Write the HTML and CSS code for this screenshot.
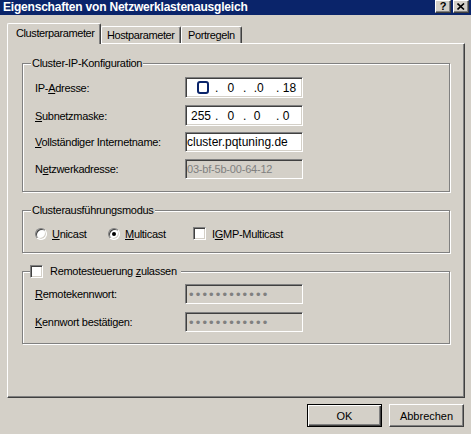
FILE: index.html
```html
<!DOCTYPE html>
<html lang="de">
<head>
  <meta charset="UTF-8" />
  <title>Eigenschaften von Netzwerklastenausgleich</title>
  <link rel="stylesheet" href="styles.css">
</head>
<body>
  <div class="window">
    <div class="titlebar">
      <span class="title">Eigenschaften von Netzwerklastenausgleich</span>
      <div class="caption-buttons">
        <div class="cap-btn help">?</div>
        <div class="cap-btn">
          <svg width="8" height="7" viewBox="0 0 8 7">
            <path d="M0.5 0.5 L7 6.5 M7 0.5 L0.5 6.5" stroke="#000" stroke-width="1.6" fill="none"/>
          </svg>
        </div>
      </div>
    </div>

    <div class="tabs">
      <div class="tab active">Clusterparameter</div>
      <div class="tab host">Hostparameter</div>
      <div class="tab port">Portregeln</div>
    </div>

    <div class="panel">
      <!-- Cluster-IP -->
      <fieldset class="group group-ip">
        <legend>Cluster-IP-Konfiguration</legend>
        <div class="row">
          <span class="label">IP-<u>A</u>dresse:</span>
          <div class="field ip">
            <span class="oct o1"><span class="caret"></span></span><span class="dot">.</span>
            <span class="oct o2">0</span><span class="dot">.</span>
            <span class="oct o3">.0</span><span class="dot">.</span>
            <span class="oct o4">18</span>
          </div>
        </div>
        <div class="row">
          <span class="label"><u>S</u>ubnetzmaske:</span>
          <div class="field ip">
            <span class="oct o1">255</span><span class="dot">.</span>
            <span class="oct o2">0</span><span class="dot">.</span>
            <span class="oct o3">0</span><span class="dot">.</span>
            <span class="oct o4">0</span>
          </div>
        </div>
        <div class="row short">
          <span class="label"><u>V</u>ollständiger Internetname:</span>
          <div class="field text">cluster.pqtuning.de</div>
        </div>
        <div class="row short">
          <span class="label">N<u>e</u>tzwerkadresse:</span>
          <div class="field disabled">03-bf-5b-00-64-12</div>
        </div>
      </fieldset>

      <!-- Modus -->
      <fieldset class="group group-mode">
        <legend>Clusterausführungsmodus</legend>
        <div class="options">
          <div class="option opt-uni"><span class="radio"></span><span><u>U</u>nicast</span></div>
          <div class="option opt-multi"><span class="radio checked"></span><span><u>M</u>ulticast</span></div>
          <div class="option"><span class="check"></span><span>I<u>G</u>MP-Multicast</span></div>
        </div>
      </fieldset>

      <!-- Remote -->
      <fieldset class="group group-remote">
        <legend><span class="check"></span><span>Remotesteuerung <u>z</u>ulassen</span></legend>
        <div class="row short">
          <span class="label"><u>R</u>emotekennwort:</span>
          <div class="field disabled"><span class="dots">••••••••••••</span></div>
        </div>
        <div class="row short">
          <span class="label"><u>K</u>ennwort bestätigen:</span>
          <div class="field disabled"><span class="dots">••••••••••••</span></div>
        </div>
      </fieldset>
    </div>

    <div class="buttons">
      <div class="btn default">OK</div>
      <div class="btn">Abbrechen</div>
    </div>
  </div>
</body>
</html>
```

FILE: styles.css
```css
body {
  margin: 0;
  background-color: #d4d0c8;
  font-family: 'Liberation Sans', Arial, sans-serif;
  font-size: 11px;
  color: #000;
}

.window {
  width: 471px;
  height: 434px;
  background-color: #d4d0c8;
  overflow: hidden;
}

/* Titelleiste */
.titlebar {
  height: 15px;
  background-color: #0a246a;
  display: flex;
  justify-content: space-between;
  align-items: flex-start;
}

.title {
  color: #fff;
  font-weight: bold;
  font-size: 12px;
  letter-spacing: -0.2px;
  line-height: 15px;
  padding-left: 3px;
}

.caption-buttons {
  display: flex;
  gap: 2px;
  padding-right: 2px;
}

.cap-btn {
  width: 16px;
  height: 13px;
  box-sizing: border-box;
  background-color: #d4d0c8;
  border: 1px solid;
  border-color: #fff #404040 #404040 #fff;
  box-shadow: inset -1px -1px 0 #808080;
  display: flex;
  align-items: center;
  justify-content: center;
}

.cap-btn.help {
  font-weight: bold;
  font-size: 11px;
  line-height: 11px;
}

/* Reiter */
.tabs {
  display: flex;
  align-items: flex-end;
  margin: 8px 0 0 7px;
  height: 21px;
}

.tab {
  box-sizing: border-box;
  height: 17px;
  margin-bottom: 1px;
  padding: 2px 0 1px 5px;
  line-height: 13px;
  letter-spacing: -0.4px;
  border-top: 1px solid #fff;
  border-left: 1px solid #fff;
  border-right: 1px solid #404040;
  box-shadow: inset -1px 0 0 #808080;
  border-radius: 2px 2px 0 0;
  background-color: #d4d0c8;
}

.tab.active {
  position: relative;
  z-index: 1;
  width: 94px;
  height: 21px;
  margin-bottom: 0;
  padding: 3px 0 4px 8px;
}

.tab.host {
  width: 80px;
}

.tab.port {
  width: 61px;
  padding-left: 6px;
}

.panel {
  width: 458px;
  height: 355px;
  box-sizing: border-box;
  margin: -1px 0 0 7px;
  padding: 13px 0 0 14px;
  border-top: 1px solid #fff;
  border-left: 1px solid #fff;
  border-right: 1px solid #404040;
  border-bottom: 1px solid #404040;
  box-shadow: inset -1px -1px 0 #808080;
}

/* Gruppen */
.group {
  width: 428px;
  box-sizing: border-box;
  margin: 0;
  padding: 0 12px;
  border: 1px solid #808080;
  box-shadow: inset 1px 1px 0 #fff, 1px 1px 0 #fff;
  min-inline-size: 0;
}

.group legend {
  margin-left: -4px;
  padding: 0 1px;
  line-height: 13px;
  letter-spacing: -0.3px;
  background-color: #d4d0c8;
}

.group-ip {
  padding-top: 7px;
  padding-bottom: 12px;
}

.group-mode {
  margin-top: 12px;
  padding-top: 10px;
  padding-bottom: 12px;
}

.group-remote {
  margin-top: 12px;
  padding-top: 6px;
  padding-bottom: 11px;
}

.group-remote legend {
  display: flex;
  align-items: center;
  gap: 6px;
  padding: 0 4px 0 0;
  margin-left: -5px;
}

.row {
  display: flex;
  align-items: center;
  height: 21px;
  margin-bottom: 7px;
}

.row + .row {
  margin-bottom: 6px;
}

.row.short {
  height: 20px;
  margin-bottom: 7px;
}

.group-remote .row.short {
  margin-bottom: 8px;
}

.row:last-child,
.group-remote .row.short:last-child {
  margin-bottom: 0;
}

.label {
  width: 150px;
  letter-spacing: -0.3px;
}

/* Eingabefelder */
.field {
  width: 118px;
  height: 100%;
  box-sizing: border-box;
  background-color: #fff;
  border: 1px solid;
  border-color: #808080 #fff #fff #808080;
  box-shadow: inset 1px 1px 0 #404040, inset -1px -1px 0 #d4d0c8;
  display: flex;
  align-items: center;
  padding-left: 1px;
  white-space: nowrap;
}

.field.text {
  font-size: 12px;
}

.field.disabled {
  background-color: #d4d0c8;
  color: #808080;
  letter-spacing: -0.2px;
}

.field.ip {
  font-size: 12px;
}

.oct {
  display: flex;
  justify-content: center;
  align-items: center;
}

.o1 { width: 29px; }
.o2 { width: 25px; }
.o3 { width: 30px; justify-content: flex-start; padding-left: 7px; box-sizing: border-box; }
.o4 { width: 20px; justify-content: flex-start; padding-left: 3px; }

.dot {
  width: 4px;
}

.caret {
  width: 12px;
  height: 13px;
  box-sizing: border-box;
  border: 2px solid #0a246a;
  border-radius: 3px;
  background-color: #fff;
  margin-left: 4px;
}

.dots {
  font-size: 13px;
  letter-spacing: 2.15px;
  padding-left: 2px;
}

/* Optionen */
.options {
  display: flex;
  align-items: center;
  height: 13px;
}

.option {
  display: flex;
  align-items: center;
  gap: 5px;
  letter-spacing: -0.3px;
}

.opt-uni { width: 73px; }
.opt-multi { width: 85px; }

.radio {
  width: 12px;
  height: 12px;
  box-sizing: border-box;
  border-radius: 50%;
  background-color: #fff;
  border: 1px solid;
  border-color: #808080 #fff #fff #808080;
  box-shadow: inset 1px 1px 0 #404040, inset -1px -1px 0 #d4d0c8;
  display: flex;
  align-items: center;
  justify-content: center;
}

.radio.checked::after {
  content: "";
  width: 4px;
  height: 4px;
  border-radius: 50%;
  background-color: #000;
}

.check {
  width: 13px;
  height: 13px;
  box-sizing: border-box;
  background-color: #fff;
  border: 1px solid;
  border-color: #808080 #fff #fff #808080;
  box-shadow: inset 1px 1px 0 #404040, inset -1px -1px 0 #d4d0c8;
  margin-right: 1px;
}

/* Schaltflächen */
.buttons {
  display: flex;
  justify-content: flex-end;
  gap: 7px;
  margin-top: 6px;
  padding-right: 7px;
}

.btn {
  width: 75px;
  height: 23px;
  box-sizing: border-box;
  border: 1px solid;
  border-color: #fff #404040 #404040 #fff;
  box-shadow: inset -1px -1px 0 #808080;
  display: flex;
  align-items: center;
  justify-content: center;
}

.btn.default {
  border: 1px solid #000;
  box-shadow: inset 1px 1px 0 #fff, inset -1px -1px 0 #404040, inset -2px -2px 0 #808080;
}
```
